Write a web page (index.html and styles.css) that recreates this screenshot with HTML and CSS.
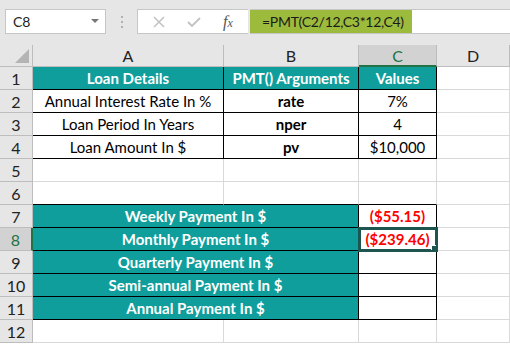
FILE: index.html
```html
<!DOCTYPE html>
<html>
<head>
  <title>PMT Loan Payments</title>
  <link rel="stylesheet" href="styles.css">
</head>
<body>
  <div class="formula-bar">
    <div class="name-box">
      <span>C8</span>
      <svg class="caret" width="8" height="5" viewBox="0 0 8 5"><path d="M0 0 L8 0 L4 4 Z" fill="#777"/></svg>
    </div>
    <div class="grip">
      <span></span><span></span><span></span>
    </div>
    <div class="fx-tools">
      <svg width="12" height="12" viewBox="0 0 12 12"><path d="M1 1 L11 11 M11 1 L1 11" stroke="#c2c2c2" stroke-width="1.5"/></svg>
      <svg width="14" height="12" viewBox="0 0 14 12"><path d="M1 6 L5 10 L13 2" stroke="#c2c2c2" stroke-width="1.8" fill="none"/></svg>
      <span class="fx">f<i>x</i></span>
    </div>
    <div class="formula">
      <span class="formula-text">=PMT(C2/12,C3*12,C4)</span>
    </div>
  </div>

  <table class="sheet">
    <colgroup>
      <col class="col-head">
      <col class="col-a">
      <col class="col-b">
      <col class="col-c">
      <col class="col-d">
    </colgroup>
    <tr class="head-row">
      <th class="corner"><span class="corner-tri"></span></th>
      <th>A</th>
      <th>B</th>
      <th class="active-col">C</th>
      <th>D</th>
    </tr>
    <tr>
      <th class="row-head">1</th>
      <td class="box head">Loan Details</td>
      <td class="box head">PMT() Arguments</td>
      <td class="box head">Values</td>
      <td></td>
    </tr>
    <tr>
      <th class="row-head">2</th>
      <td class="box">Annual Interest Rate In %</td>
      <td class="box bold">rate</td>
      <td class="box">7%</td>
      <td></td>
    </tr>
    <tr>
      <th class="row-head">3</th>
      <td class="box">Loan Period In Years</td>
      <td class="box bold">nper</td>
      <td class="box">4</td>
      <td></td>
    </tr>
    <tr>
      <th class="row-head">4</th>
      <td class="box">Loan Amount In $</td>
      <td class="box bold">pv</td>
      <td class="box">$10,000</td>
      <td></td>
    </tr>
    <tr>
      <th class="row-head">5</th>
      <td></td><td></td><td></td><td></td>
    </tr>
    <tr>
      <th class="row-head">6</th>
      <td class="edge"></td><td class="edge"></td><td class="edge"></td><td></td>
    </tr>
    <tr>
      <th class="row-head">7</th>
      <td class="box head" colspan="2">Weekly Payment In $</td>
      <td class="box neg">($55.15)</td>
      <td></td>
    </tr>
    <tr>
      <th class="row-head active-row">8</th>
      <td class="box head" colspan="2">Monthly Payment In $</td>
      <td class="box neg selected">($239.46)<span class="handle"></span></td>
      <td></td>
    </tr>
    <tr>
      <th class="row-head">9</th>
      <td class="box head" colspan="2">Quarterly Payment In $</td>
      <td class="box"></td>
      <td></td>
    </tr>
    <tr>
      <th class="row-head">10</th>
      <td class="box head" colspan="2">Semi-annual Payment In $</td>
      <td class="box"></td>
      <td></td>
    </tr>
    <tr>
      <th class="row-head">11</th>
      <td class="box head" colspan="2">Annual Payment In $</td>
      <td class="box"></td>
      <td></td>
    </tr>
    <tr>
      <th class="row-head">12</th>
      <td></td><td></td><td></td><td></td>
    </tr>
  </table>
</body>
</html>
```

FILE: styles.css
```css
:root {
  --teal: #0f9e9b;
  --grid: #d9d9d9;
  --head-bg: #e6e6e6;
  --head-line: #bdbdbd;
  --excel-green: #217346;
  --select: #1d5650;
}

body {
  margin: 0;
  width: 510px;
  height: 344px;
  overflow: hidden;
  background: #fff;
  font-family: Lato, 'Open Sans', sans-serif;
  font-size: 15px;
  color: #000;
}

.formula-bar {
  display: flex;
  align-items: flex-start;
  height: 45px;
  padding-top: 9px;
  box-sizing: border-box;
  background: #e6e6e6;
}

.name-box {
  display: flex;
  align-items: center;
  justify-content: space-between;
  width: 101px;
  height: 25px;
  margin-left: 5px;
  padding: 0 6px 0 7px;
  box-sizing: border-box;
  background: #fff;
  border: 1px solid #c6c6c6;
  font-size: 14px;
  color: #222;
}

.grip {
  display: flex;
  flex-direction: column;
  justify-content: center;
  gap: 3px;
  width: 31px;
  height: 25px;
  align-items: center;
}

.grip span {
  width: 2px;
  height: 2px;
  background: #b0b0b0;
}

.fx-tools {
  display: flex;
  align-items: center;
  width: 111px;
  height: 25px;
  box-sizing: border-box;
  background: #fff;
  border: 1px solid #c6c6c6;
  border-right: none;
  padding-left: 15px;
}

.fx-tools svg {
  margin-right: 22px;
}

.fx {
  font-family: 'Liberation Serif', serif;
  font-style: italic;
  font-size: 16px;
  color: #555;
}

.fx i {
  font-size: 12px;
}

.formula {
  flex: 1;
  height: 25px;
  margin-left: 2px;
  box-sizing: border-box;
  background: #fff;
  border-top: 1px solid #c6c6c6;
  border-bottom: 1px solid #c6c6c6;
}

.formula-text {
  display: inline-block;
  height: 23px;
  line-height: 23px;
  padding: 0 8px 0 12px;
  background: #9cbb3c;
  color: #1a1a1a;
  font-size: 14px;
  letter-spacing: -0.3px;
}

.sheet {
  table-layout: fixed;
  width: 510px;
  border-collapse: separate;
  border-spacing: 0;
}

.col-head { width: 33px; }
.col-a { width: 191px; }
.col-b { width: 135px; }
.col-c { width: 78px; }
.col-d { width: 73px; }

.sheet tr {
  height: 23px;
}

.sheet .head-row {
  height: 22px;
}

.sheet th,
.sheet td {
  padding: 0;
  text-align: center;
  white-space: nowrap;
  overflow: hidden;
  border-right: 1px solid var(--grid);
  border-bottom: 1px solid var(--grid);
}

.sheet th {
  background: var(--head-bg);
  font-weight: normal;
  font-size: 16px;
  color: #222;
  border-right-color: var(--head-line);
  border-bottom-color: var(--head-line);
}

.corner {
  position: relative;
}

.corner-tri {
  position: absolute;
  right: 3px;
  bottom: 3px;
  width: 0;
  height: 0;
  border-left: 14px solid transparent;
  border-bottom: 14px solid #b4b4b4;
}

.active-col {
  background: #d2d2d2 !important;
  color: var(--excel-green) !important;
  border-bottom: 2px solid var(--excel-green) !important;
}

.active-row {
  background: #d2d2d2 !important;
  color: var(--excel-green) !important;
  border-right: 2px solid var(--excel-green) !important;
}

.sheet td.box {
  border-right-color: #000;
  border-bottom-color: #000;
}

.sheet td.edge {
  border-bottom-color: #000;
}

.sheet td.head {
  background: var(--teal);
  color: #fff;
  font-weight: bold;
}

.bold {
  font-weight: bold;
}

.neg {
  color: #ff0000;
  font-weight: bold;
}

.selected {
  position: relative;
  outline: 3px solid var(--select);
  outline-offset: -2px;
}

.handle {
  position: absolute;
  right: -2px;
  bottom: -2px;
  width: 5px;
  height: 5px;
  background: var(--select);
  border: 1px solid #fff;
}
```
